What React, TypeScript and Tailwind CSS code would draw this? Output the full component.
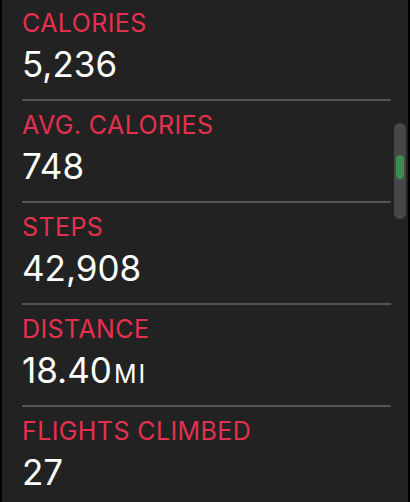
import { Fragment } from "react";

interface Stat {
  label: string;
  value: string;
  unit?: string;
}

const stats: Stat[] = [
  { label: "CALORIES", value: "5,236" },
  { label: "AVG. CALORIES", value: "748" },
  { label: "STEPS", value: "42,908" },
  { label: "DISTANCE", value: "18.40", unit: "MI" },
  { label: "FLIGHTS CLIMBED", value: "27" },
];

function StatRow({ stat, first, last }: { stat: Stat; first: boolean; last: boolean }) {
  return (
    <div
      className={
        (first ? "pt-[8px] " : "pt-[9px] ") +
        (last ? "" : "pb-[15px] border-b-2 border-[#555555]")
      }
    >
      <div className="text-[25px] leading-[30px] tracking-[0.4px] text-[#e5304f]">
        {stat.label}
      </div>
      <div className="mt-[6px] h-[40px] text-[35px] leading-[40px] text-white">
        {stat.value}
        {stat.unit ? (
          <span className="ml-[2px] text-[25px] leading-none tracking-[2px]">{stat.unit}</span>
        ) : null}
      </div>
    </div>
  );
}

export default function App() {
  return (
    <div
      className="w-[410px] h-[502px] bg-black flex px-[2px] overflow-hidden"
      style={{ fontFamily: "Inter, 'Noto Sans', sans-serif" }}
    >
      <div className="relative flex-1 bg-[#222222] overflow-hidden">
        <div className="pl-[20px] pr-[17px]">
          {stats.map((stat, i) => (
            <Fragment key={stat.label}>
              <StatRow stat={stat} first={i === 0} last={i === stats.length - 1} />
            </Fragment>
          ))}
        </div>

        {/* scroll indicator */}
        <div className="absolute left-[392px] top-[123px] w-[12px] h-[96px] rounded-full bg-[#474747]">
          <div className="mx-auto mt-[32px] w-[8px] h-[24px] rounded-full bg-[#3a8a52]" />
        </div>
      </div>
    </div>
  );
}
